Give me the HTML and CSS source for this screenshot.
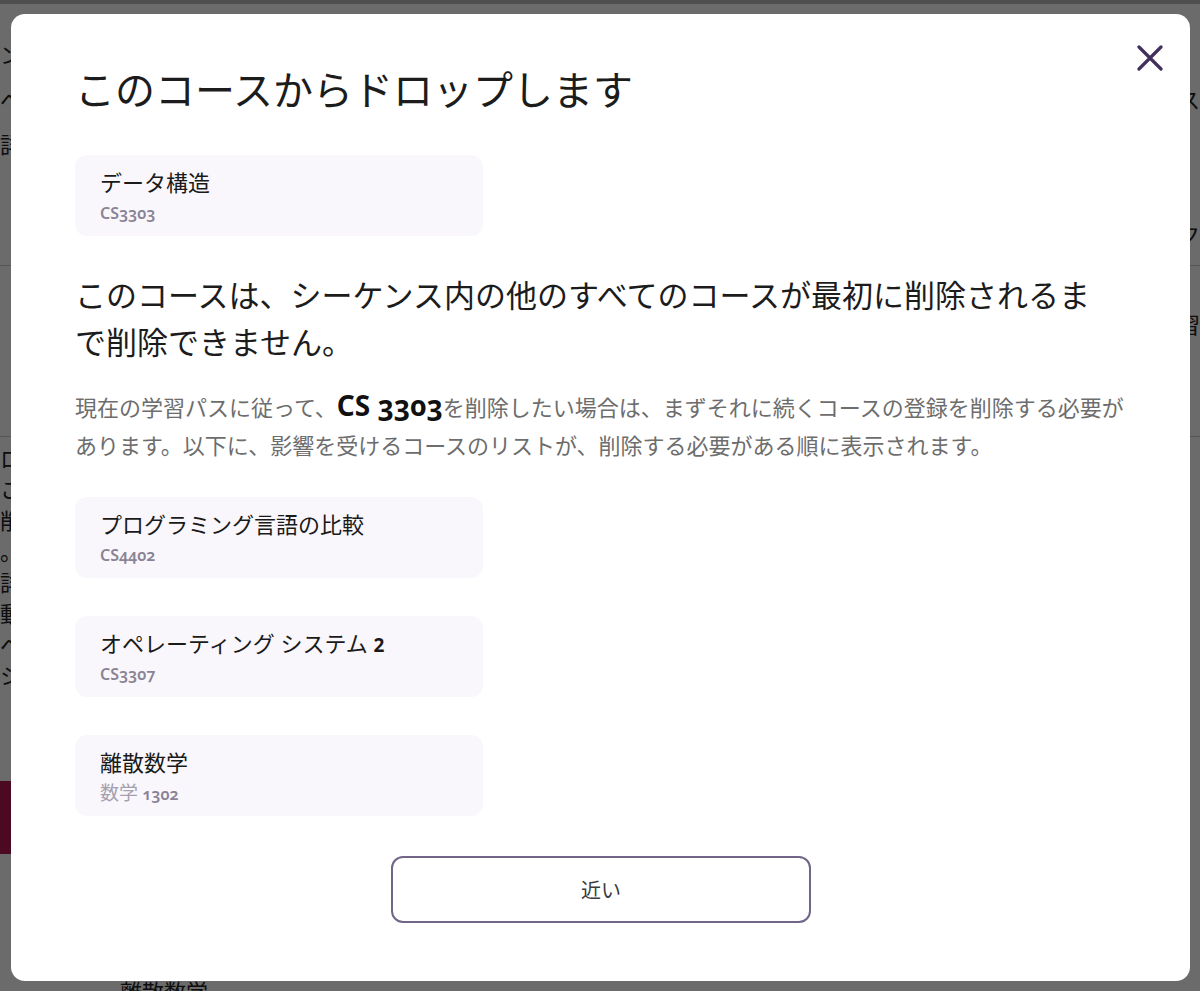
FILE: index.html
```html
<!DOCTYPE html>
<html lang="ja">
<head>
    <meta charset="utf-8">
    <title>コースの登録</title>
    <link rel="stylesheet" href="styles.css">
</head>
<body>
    <!-- Course page that sits behind the dialog -->
    <div class="page">
        <div class="page-top">
            <div class="page-col">
                <p>ンスの詳細</p>
                <p>ペース</p>
                <p>詳細を見る</p>
            </div>
            <div class="page-col page-col-right">
                <p>&nbsp;</p>
                <p>コース</p>
                <p>&nbsp;</p>
                <p>&nbsp;</p>
                <p>ブック</p>
            </div>
        </div>
        <div class="page-row">
            <div class="page-col"></div>
            <div class="page-col page-col-right">
                <p>学習</p>
            </div>
        </div>
        <div class="page-body">
            <p>ロードマップ</p>
            <p>このコース</p>
            <p>削除する</p>
            <p>。</p>
            <p>詳細</p>
            <p>動作</p>
            <p>ベース</p>
            <p>シラバス</p>
        </div>
        <button class="page-btn">登録</button>
        <div class="page-foot">離散数学</div>
    </div>

    <div class="backdrop"></div>

    <div class="modal" role="dialog">
        <button class="modal-close" aria-label="閉じる">
            <svg width="26" height="26" viewBox="0 0 26 26">
                <path d="M2 2 L24 24 M24 2 L2 24" stroke="currentColor" stroke-width="3.2" stroke-linecap="round" fill="none"/>
            </svg>
        </button>

        <h1 class="modal-title">このコースからドロップします</h1>

        <div class="course">
            <div class="course-name">データ構造</div>
            <div class="course-code">CS3303</div>
        </div>

        <h2 class="modal-warning">このコースは、シーケンス内の他のすべてのコースが最初に削除されるまで削除できません。</h2>

        <p class="modal-text">現在の学習パスに従って、<b class="code-inline">CS 3303</b>を削除したい場合は、まずそれに続くコースの登録を削除する必要があります。以下に、影響を受けるコースのリストが、削除する必要がある順に表示されます。</p>

        <div class="course-list">
            <div class="course">
                <div class="course-name">プログラミング言語の比較</div>
                <div class="course-code">CS4402</div>
            </div>
            <div class="course">
                <div class="course-name">オペレーティング システム <span class="num">2</span></div>
                <div class="course-code">CS3307</div>
            </div>
            <div class="course">
                <div class="course-name">離散数学</div>
                <div class="course-code"><span class="code-jp">数学</span> 1302</div>
            </div>
        </div>

        <button class="modal-btn">近い</button>
    </div>
</body>
</html>
```

FILE: styles.css
```css
* {
    margin: 0;
    padding: 0;
    box-sizing: border-box;
}

body {
    background: #fff;
    color: #1c1c1c;
    font-family: "Noto Sans", "Noto Sans CJK JP", sans-serif;
    height: 100vh;
    overflow: hidden;
}

/* page behind the dialog */
.page {
    border-top: 4px solid #bbb;
    font-size: 22px;
    color: #222;
}

.page-top {
    display: flex;
    justify-content: space-between;
    height: 262px;
    padding-top: 28px;
    border-bottom: 1px solid #ccc;
}

.page-col p {
    line-height: 45px;
}

.page-col-right {
    text-align: right;
}

.page-row {
    display: flex;
    justify-content: space-between;
    height: 171px;
    padding-top: 36px;
    border-bottom: 1px solid #ccc;
}

.page-body {
    padding-top: 6px;
}

.page-body p {
    line-height: 31px;
}

.page-btn {
    display: block;
    width: 180px;
    height: 73px;
    margin-top: 90px;
    border: none;
    background: #b3194f;
    color: #fff;
    font: inherit;
}

.page-foot {
    margin: 120px 0 0 120px;
    font-size: 22px;
}

.backdrop {
    position: fixed;
    top: 0;
    left: 0;
    width: 100%;
    height: 100%;
    background: rgba(0, 0, 0, 0.58);
}

/* dialog */
.modal {
    position: fixed;
    top: 14px;
    left: 11px;
    width: 1179px;
    height: 967px;
    background: #fff;
    border-radius: 14px;
    padding: 50px 63px 0 64px;
}

.modal-close {
    position: absolute;
    top: 31px;
    right: 27px;
    border: none;
    background: none;
    color: #41305d;
    line-height: 0;
    cursor: pointer;
}

.modal-title {
    font-size: 40px;
    font-weight: 400;
    line-height: 52px;
    margin-bottom: 39px;
}

.course {
    width: 408px;
    height: 81px;
    padding: 14px 25px 0;
    background: #f9f7fb;
    border-radius: 12px;
}

.course-name {
    font-size: 22px;
    line-height: 26px;
    height: 26px;
    color: #1a1a1a;
}

.course-name .num {
    font-weight: 700;
    font-size: 19px;
}

.course-code {
    margin-top: 8px;
    font-size: 16px;
    line-height: 20px;
    height: 20px;
    font-weight: 600;
    color: #8a8396;
    font-feature-settings: "onum";
}

.code-jp {
    font-weight: 400;
    font-size: 19px;
    color: #a59fae;
}

.modal-warning {
    max-width: 1030px;
    margin-top: 36px;
    font-size: 31px;
    font-weight: 400;
    line-height: 47px;
}

.modal-text {
    margin-top: 22px;
    font-size: 22px;
    line-height: 38px;
    color: #6d6d6d;
}

.code-inline {
    font-size: 28px;
    font-weight: 700;
    line-height: 1;
    color: #111;
    font-feature-settings: "onum";
}

.course-list {
    display: flex;
    flex-direction: column;
    gap: 38px;
    margin-top: 33px;
}

.modal-btn {
    display: block;
    width: 420px;
    height: 67px;
    margin: 40px auto 0;
    border: 2px solid #716687;
    border-radius: 12px;
    background: #fff;
    color: #3b3b3b;
    font-family: inherit;
    font-size: 20px;
    cursor: pointer;
}
```
